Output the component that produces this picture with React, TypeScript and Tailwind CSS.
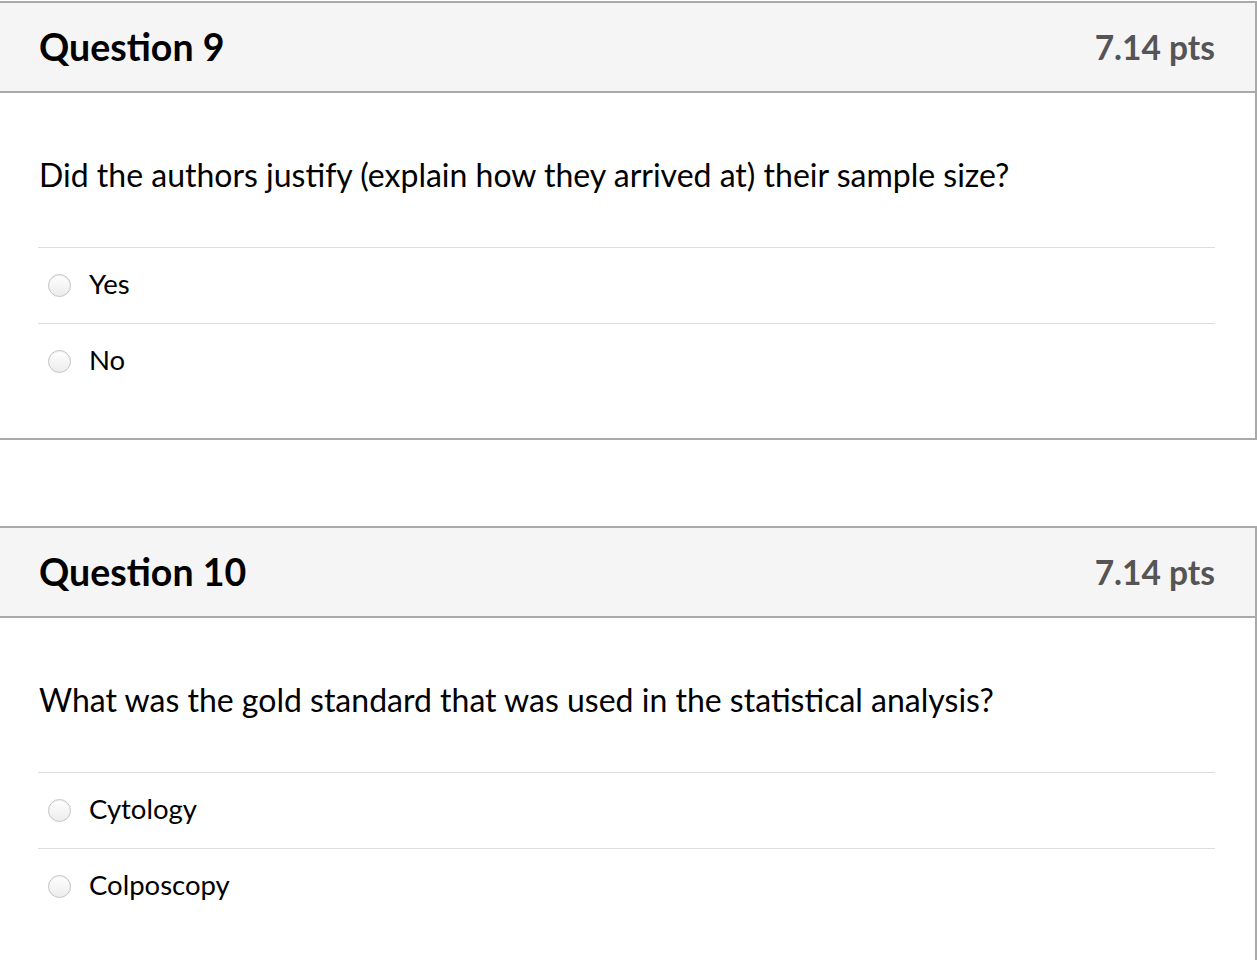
import React from 'react'

interface Question {
  title: string
  points: string
  text: string
  answers: string[]
}

const questions: Question[] = [
  {
    title: 'Question 9',
    points: '7.14 pts',
    text: 'Did the authors justify (explain how they arrived at) their sample size?',
    answers: ['Yes', 'No'],
  },
  {
    title: 'Question 10',
    points: '7.14 pts',
    text: 'What was the gold standard that was used in the statistical analysis?',
    answers: ['Cytology', 'Colposcopy'],
  },
]

function Radio() {
  return (
    <span className="block w-[23px] h-[23px] rounded-full border border-[#c4c4c4] bg-gradient-to-b from-white to-[#ececec] shadow-[inset_0_1px_1px_rgba(0,0,0,0.06)] shrink-0" />
  )
}

function QuestionPanel({ q }: { q: Question }) {
  return (
    <div className="border-t-2 border-r-2 border-b-2 border-[#aaaaaa] bg-white w-[1257px]">
      <div className="h-[90px] flex items-center justify-between pl-[39px] pr-[40px] bg-[#f5f5f5] border-b-2 border-[#aaaaaa]">
        <span className="text-[37.5px] font-bold text-black leading-none">{q.title}</span>
        <span className="text-[33.5px] font-bold text-[#555555] leading-none pt-[2px]">{q.points}</span>
      </div>
      <div className="pl-[38px] pr-[40px] pt-[62px] pb-[39px]">
        <p className="text-[32px] leading-[40px] text-black pl-[1px]">{q.text}</p>
        <div className="mt-[52px]">
          {q.answers.map((a) => (
            <div key={a} className="h-[76px] border-t border-[#dddddd] flex items-center pl-[10px] gap-[18px]">
              <Radio />
              <span className="text-[27.5px] leading-none text-black pb-[3px]">{a}</span>
            </div>
          ))}
        </div>
      </div>
    </div>
  )
}

export default function App() {
  return (
    <div className="min-h-screen bg-white pt-[1px] font-['Lato',sans-serif] overflow-hidden">
      <div className="flex flex-col gap-[86px]">
        {questions.map((q) => (
          <QuestionPanel key={q.title} q={q} />
        ))}
      </div>
    </div>
  )
}
